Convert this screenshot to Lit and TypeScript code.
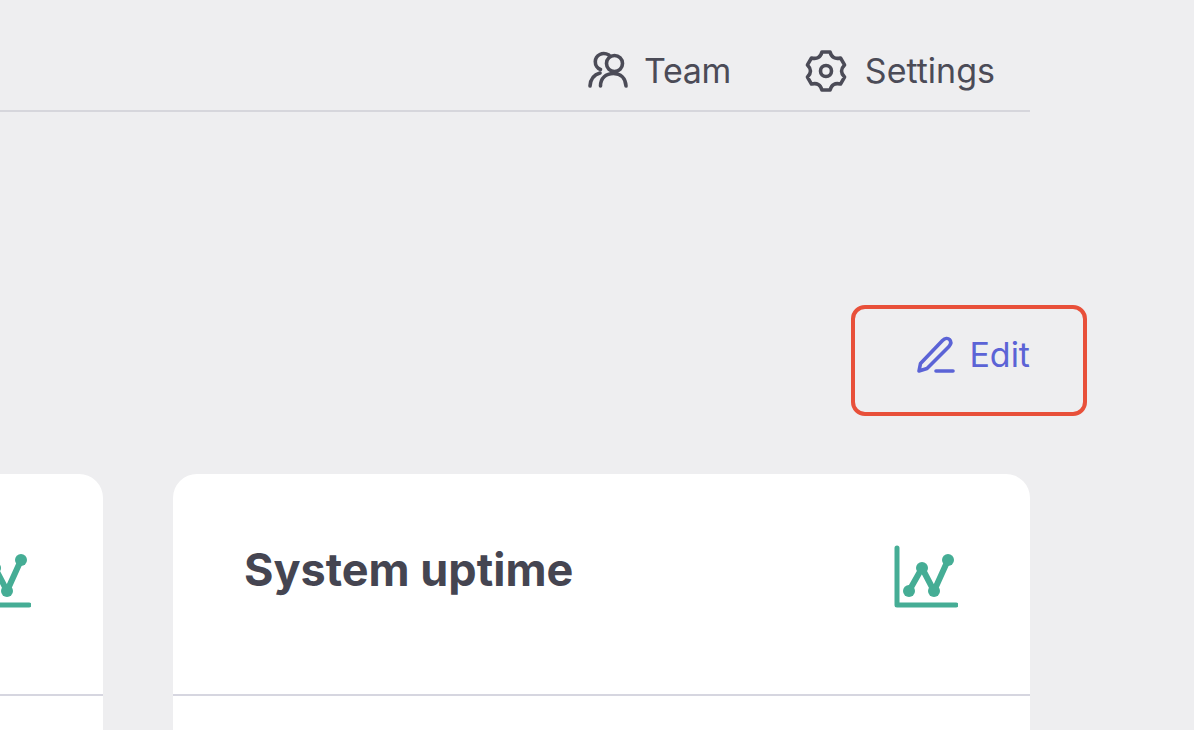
import { LitElement, html, css } from "lit";
import { customElement } from "lit/decorators.js";

const polar = (r: number, deg: number) => {
  const a = (deg * Math.PI) / 180;
  return `${(22 + r * Math.cos(a)).toFixed(2)} ${(22 + r * Math.sin(a)).toFixed(2)}`;
};

const gearPath = [0, 1, 2, 3, 4, 5]
  .map((i) => {
    const a = -90 + 60 * i;
    const start = i === 0 ? `M${polar(19.5, a - 12)}` : "";
    return `${start}L${polar(19.5, a + 12)}Q${polar(12.5, a + 30)} ${polar(19.5, a + 48)}`;
  })
  .join("") + "Z";

const chart = html`<svg class="chart" viewBox="0 0 64 64" fill="none" stroke="#45ad95" stroke-linecap="round" stroke-linejoin="round">
  <path d="M3 3V60H62" stroke-width="5" />
  <path d="M15 46L28 23L40 46L54 15" stroke-width="6" />
  <circle cx="15" cy="46" r="6" fill="#45ad95" stroke="none" />
  <circle cx="28" cy="23" r="6" fill="#45ad95" stroke="none" />
  <circle cx="40" cy="46" r="6" fill="#45ad95" stroke="none" />
  <circle cx="54" cy="15" r="6" fill="#45ad95" stroke="none" />
</svg>`;

@customElement("app-root")
export class AppRoot extends LitElement {
  static styles = css`
    :host {
      display: block;
      width: 1194px;
      height: 730px;
      overflow: hidden;
      background: #eeeef0;
      font-family: Inter, "Liberation Sans", sans-serif;
      color: #4b4b57;
    }
    .main {
      width: 1030px;
    }
    .nav {
      display: flex;
      justify-content: flex-end;
      align-items: center;
      gap: 73px;
      height: 78px;
      padding: 32px 35px 0 0;
      border-bottom: 2px solid #d6d6dc;
      font-size: 34px;
      line-height: 42px;
    }
    .nav-item {
      display: flex;
      align-items: center;
      gap: 17px;
    }
    .nav-item.first {
      gap: 15px;
    }
    .team-label {
      letter-spacing: -0.4px;
    }
    .team {
      width: 42px;
      height: 42px;
      flex: none;
    }
    .gear {
      width: 44px;
      height: 44px;
      flex: none;
    }
    .toolbar {
      display: flex;
      justify-content: flex-end;
      padding-top: 193px;
      margin-right: -57px;
    }
    .edit {
      box-sizing: border-box;
      width: 236px;
      height: 111px;
      display: flex;
      align-items: center;
      justify-content: flex-end;
      gap: 13px;
      padding: 0 53px 12px 0;
      border: 4px solid #e8503a;
      border-radius: 14px;
      color: #5b63d6;
      font-size: 34px;
      line-height: 40px;
    }
    .pen {
      width: 40px;
      height: 40px;
      flex: none;
    }
    .cards {
      display: grid;
      grid-template-columns: 857px 857px;
      gap: 70px;
      margin-top: 58px;
      margin-left: -754px;
    }
    .card {
      background: #fff;
      border-radius: 24px 24px 0 0;
      height: 256px;
    }
    .head {
      box-sizing: border-box;
      height: 222px;
      display: flex;
      justify-content: space-between;
      align-items: flex-start;
      padding: 71px 72px 0 71px;
      border-bottom: 2px solid #d6d6e0;
    }
    .card.partial .head {
      justify-content: flex-end;
    }
    .title {
      margin: 0;
      font-size: 45px;
      line-height: 50px;
      font-weight: 700;
      color: #454551;
    }
    .chart {
      width: 64px;
      height: 64px;
      flex: none;
    }
  `;

  render() {
    return html`<div class="main">
      <nav class="nav">
        <div class="nav-item first">
          <svg class="team" viewBox="0 0 42 42" fill="none" stroke="#4b4b57" stroke-width="3.6" stroke-linecap="round" stroke-linejoin="round">
            <circle cx="27.5" cy="13.5" r="8" />
            <path d="M13.5 36C13.5 28 19 23.5 26.5 23.5C33.5 23.5 38.5 28 39 36" />
            <path d="M22 5C15.5 1.5 8.5 5 8.3 11.5C8.2 15 10.5 18.5 13.5 19.5" />
            <path d="M3 36C3.5 29 7.5 24.5 13 23" />
          </svg>
          <span class="team-label">Team</span>
        </div>
        <div class="nav-item">
          <svg class="gear" viewBox="0 0 44 44" fill="none" stroke="#4b4b57" stroke-width="3.6" stroke-linecap="round" stroke-linejoin="round">
            <path d="${gearPath}" />
            <circle cx="22" cy="22" r="5.5" />
          </svg>
          <span>Settings</span>
        </div>
      </nav>
      <div class="toolbar">
        <div class="edit">
          <svg class="pen" viewBox="0 0 40 40" fill="none" stroke="#5b63d6" stroke-width="3.6" stroke-linecap="round" stroke-linejoin="round">
            <path d="M3 36L4.5 28.5L26.5 5.5C29 3 32 3 33.5 4.5C35.5 6.5 35 9 33 11.5L11 33.5Z" />
            <path d="M20 36H37" />
          </svg>
          <span>Edit</span>
        </div>
      </div>
      <div class="cards">
        <section class="card partial">
          <div class="head">${chart}</div>
        </section>
        <section class="card">
          <div class="head">
            <h2 class="title">System uptime</h2>
            ${chart}
          </div>
        </section>
      </div>
    </div>`;
  }
}
